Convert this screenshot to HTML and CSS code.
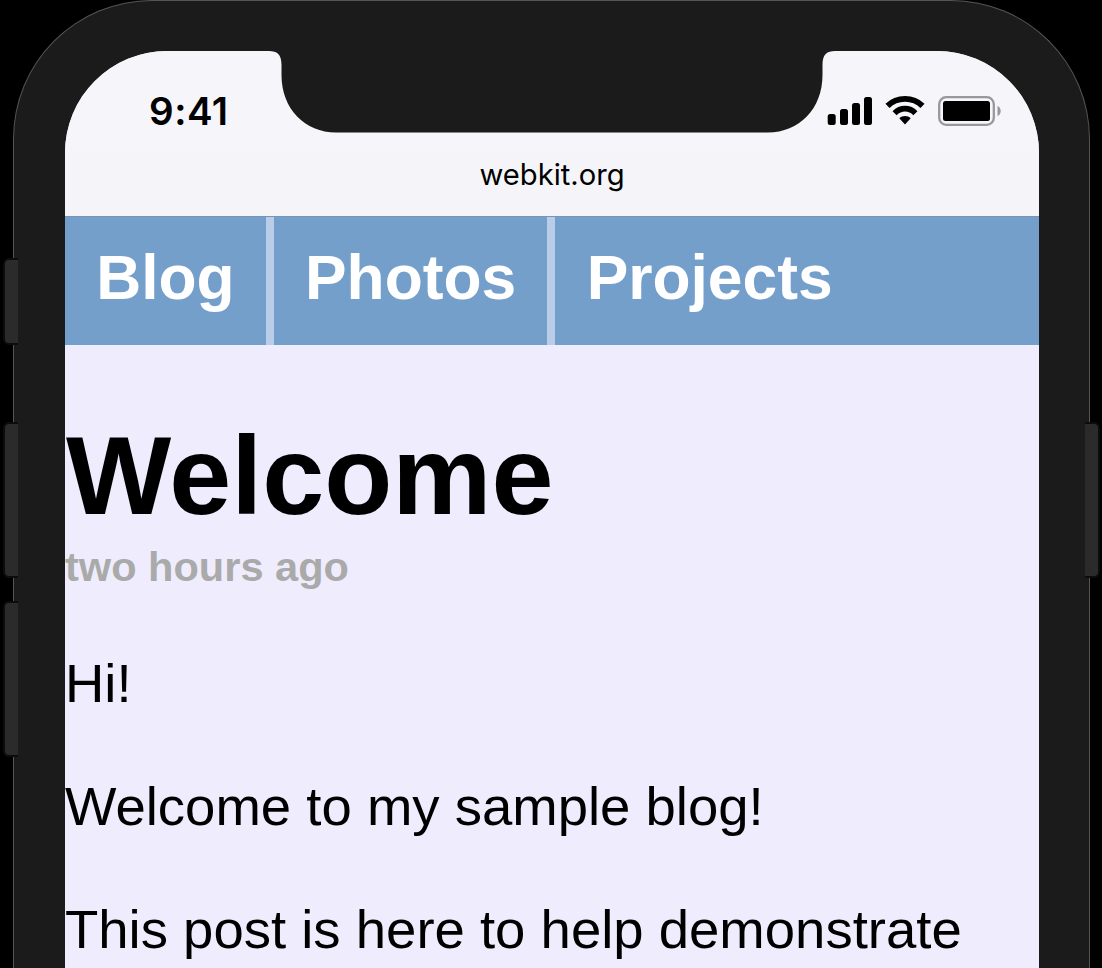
FILE: index.html
```html
<!DOCTYPE html>
<html lang="en">
<head>
<meta charset="utf-8">
<title>Sample blog</title>
<link rel="stylesheet" href="styles.css">
</head>
<body>
<div class="phone">
  <span class="button button-mute"></span>
  <span class="button button-up"></span>
  <span class="button button-down"></span>
  <span class="button button-side"></span>
  <div class="screen">
    <svg class="notch" width="566" height="82" viewBox="0 0 566 82"><path d="M0 0C8 0 12.500 3 12.500 14V24C12.500 58 36 81.500 67 81.500H499C530 81.500 553.500 58 553.500 24V14C553.500 3 558 0 566 0Z" fill="#1b1b1b"/></svg>
    <header class="status">
      <span class="time">9:41</span>
      <svg class="indicators" width="174" height="30" viewBox="0 0 174 30">
        <g>
          <rect x="0.700" y="18" width="8" height="11" rx="2.500"/>
          <rect x="13" y="13" width="8" height="16" rx="2.500"/>
          <rect x="25" y="7" width="8" height="22" rx="2.500"/>
          <rect x="37" y="1" width="8" height="28" rx="2.500"/>
        </g>
        <g fill="none" stroke="#000" stroke-width="5.800">
          <path d="M60.500 9.900C70 0.600 86 0.600 95.500 9.900"/>
          <path d="M67.600 17.200C73.500 11.200 82.500 11.200 88.400 17.200"/>
        </g>
        <path d="M72.300 22.300C75.300 19.300 80.700 19.300 83.700 22.300L78 28.500Z"/>
        <rect x="112.200" y="1.200" width="54.600" height="27.600" rx="7" fill="none" stroke="#98989b" stroke-width="2.300"/>
        <rect x="116" y="5" width="47" height="20" rx="2.500"/>
        <path d="M170.500 10C174.800 11.500 174.800 18.500 170.500 20Z" fill="#98989b"/>
      </svg>
    </header>
    <div class="address">webkit.org</div>
    <nav class="tabs">
      <a class="tab">Blog</a>
      <a class="tab">Photos</a>
      <a class="tab">Projects</a>
    </nav>
    <main class="post">
      <h1 class="title">Welcome</h1>
      <div class="date">two hours ago</div>
      <p class="text">Hi!</p>
      <p class="text">Welcome to my sample blog!</p>
      <p class="text">This post is here to help demonstrate</p>
    </main>
  </div>
</div>
</body>
</html>
```
FILE: styles.css
```css
* { box-sizing: border-box; }
body {
  margin: 0;
  height: 968px;
  overflow: hidden;
  background: #000;
  font-family: "Liberation Sans", Arial, sans-serif;
}
.phone {
  position: relative;
  width: 1077px;
  height: 968px;
  margin-left: 13px;
  padding: 50px 50px 0 51px;
  border: 1px solid #555;
  border-bottom: 0;
  border-radius: 139px 139px 0 0;
  background: #1b1b1b;
}
.button {
  position: absolute;
  left: -9px;
  width: 13px;
  background: #2b2b2b;
  border-radius: 4px 0 0 4px;
  box-shadow: 0 0 0 2px #0c0c0c;
  clip-path: inset(-3px 0 -3px -2px);
}
.button-mute { top: 259px; height: 83px; }
.button-up { top: 418px; height: 148px; }
.button-up { top: 417px; }
.button-up { top: 423px; height: 152px; }
.button-down { top: 602px; height: 152px; }
.button-side {
  left: auto;
  right: -9px;
  top: 423px;
  height: 152px;
  border-radius: 0 4px 4px 0;
  clip-path: inset(-3px -2px -3px 0);
}
.screen {
  position: relative;
  width: 974px;
  height: 917px;
  overflow: hidden;
  border-radius: 102px 102px 0 0;
  background: #efedfd;
}
.notch {
  position: absolute;
  left: 204px;
  top: 0;
  z-index: 1;
}
.status {
  display: flex;
  justify-content: space-between;
  align-items: flex-start;
  height: 101px;
  padding: 36px 38px 0 84px;
  background: #f5f5fa;
}
.time {
  font: 600 38.500px/48px Inter, sans-serif;
  letter-spacing: 0.500px;
}
.indicators { margin-top: 9px; }
.address {
  height: 64px;
  background: #f5f5f9;
  text-align: center;
  font: 400 29.200px/46px Inter, sans-serif;
}
.tabs {
  display: flex;
  height: 129px;
  background: #749fcb;
  border-top: 1px solid #7895b5;
}
.tab {
  padding: 0 31.200px;
  border-right: 8px solid #b9cce8;
  color: #fff;
  font-size: 62.330px;
  font-weight: 700;
  line-height: 122px;
}
.tab:last-child { border-right: 0; }
.title {
  margin: 67px 0 0;
  padding-left: 1px;
  font-size: 111.500px;
  line-height: 128px;
}
.date {
  padding-top: 3px;
  color: #aaa;
  font-size: 41.550px;
  font-weight: 700;
  line-height: 48px;
}
.text {
  margin: 0;
  font-size: 54.500px;
  line-height: 123px;
  white-space: nowrap;
}
.date + .text { margin-top: 31px; }
.text:last-child { height: 100px; }
```
